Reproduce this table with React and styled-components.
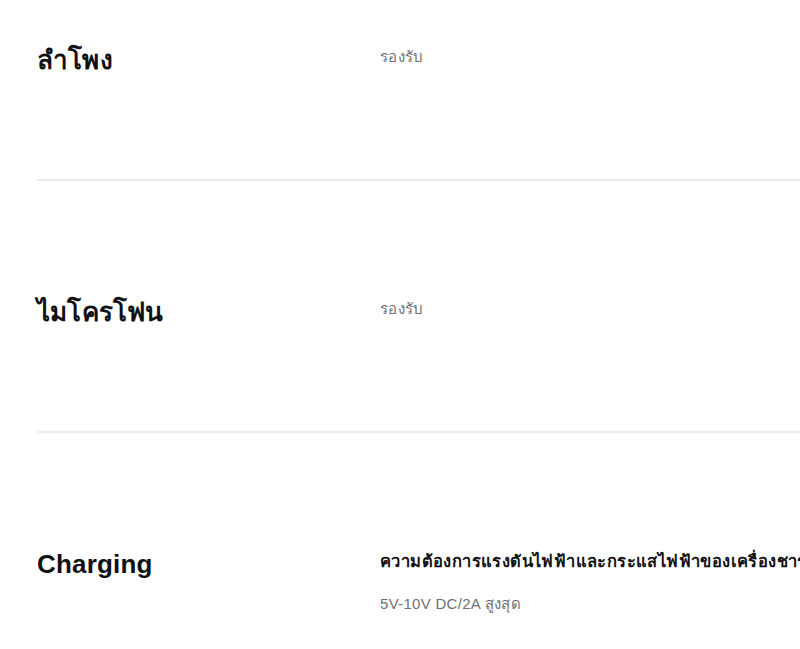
import React from "react";
import styled, { createGlobalStyle } from "styled-components";

const Global = createGlobalStyle`
  html, body { margin: 0; padding: 0; background: #fff; overflow: hidden; }
  body { font-family: "Liberation Sans", "Noto Sans", sans-serif; color: #000; }
`;

const Page = styled.div`
  width: 1200px;
  padding-left: 37px;
`;

const Row = styled.section`
  display: grid;
  grid-template-columns: 343px 1fr;
  align-items: start;
  padding: 115px 0 103px;
  border-bottom: 2px solid #ececec;
  &:first-child { padding-top: 44px; }
  &:last-child { border-bottom: none; }
`;

const Title = styled.h3`
  margin: 0;
  font-size: 26px;
  line-height: 32px;
  font-weight: 700;
  letter-spacing: 0.2px;
  color: #111;
`;

const Values = styled.div`
  display: flex;
  flex-direction: column;
  gap: 22px;
  padding-top: ${(p) => p.$offset}px;
`;

const Value = styled.p`
  margin: 0;
  white-space: nowrap;
  font-size: ${(p) => (p.$strong ? "16.5px" : "15px")};
  line-height: ${(p) => (p.$strong ? "22px" : "20px")};
  letter-spacing: ${(p) => (p.$strong ? "0.4px" : "0.3px")};
  color: ${(p) => (p.$strong ? "#111" : "#707070")};
  font-weight: ${(p) => (p.$strong ? 700 : 400)};
`;

const rows = [
  { title: "ลำโพง", values: [{ text: "รองรับ" }], offset: 3 },
  { title: "ไมโครโฟน", values: [{ text: "รองรับ" }], offset: 3 },
  {
    title: "Charging",
    offset: 2,
    values: [
      { text: "ความต้องการแรงดันไฟฟ้าและกระแสไฟฟ้าของเครื่องชาร์จ", strong: true },
      { text: "5V-10V DC/2A สูงสุด" },
    ],
  },
];

export default function App() {
  return (
    <>
      <Global />
      <Page>
        {rows.map((r) => (
          <Row key={r.title}>
            <Title>{r.title}</Title>
            <Values $offset={r.offset}>
              {r.values.map((v) => (
                <Value key={v.text} $strong={v.strong}>
                  {v.text}
                </Value>
              ))}
            </Values>
          </Row>
        ))}
      </Page>
    </>
  );
}
